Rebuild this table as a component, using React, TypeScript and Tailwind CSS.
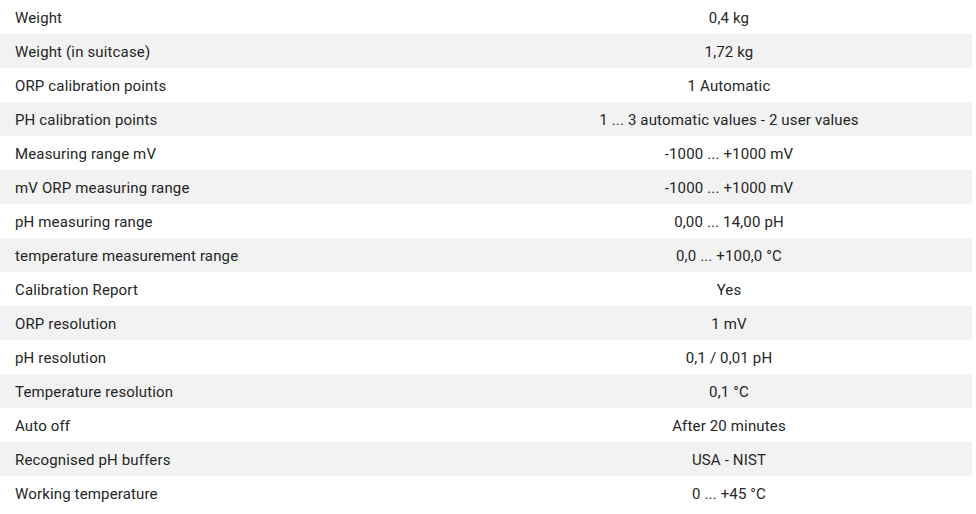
import React from 'react'

const specs: [string, string][] = [
  ['Weight', '0,4 kg'],
  ['Weight (in suitcase)', '1,72 kg'],
  ['ORP calibration points', '1 Automatic'],
  ['PH calibration points', '1 ... 3 automatic values - 2 user values'],
  ['Measuring range mV', '-1000 ... +1000 mV'],
  ['mV ORP measuring range', '-1000 ... +1000 mV'],
  ['pH measuring range', '0,00 ... 14,00 pH'],
  ['temperature measurement range', '0,0 ... +100,0 °C'],
  ['Calibration Report', 'Yes'],
  ['ORP resolution', '1 mV'],
  ['pH resolution', '0,1 / 0,01 pH'],
  ['Temperature resolution', '0,1 °C'],
  ['Auto off', 'After 20 minutes'],
  ['Recognised pH buffers', 'USA - NIST'],
  ['Working temperature', '0 ... +45 °C'],
]

export default function App() {
  return (
    <div className="w-[972px] bg-white text-[15px] tracking-[0.15px] text-[#262626] font-['Roboto',sans-serif]">
      <table className="w-full border-collapse">
        <tbody>
          {specs.map(([label, value], i) => (
            <tr key={label} className={i % 2 === 1 ? 'bg-[#f2f2f2]' : 'bg-white'}>
              <td className="h-[34px] w-1/2 pl-[15px] pt-[2px] align-middle">{label}</td>
              <td className="h-[34px] w-1/2 pt-[2px] text-center align-middle">{value}</td>
            </tr>
          ))}
        </tbody>
      </table>
    </div>
  )
}
